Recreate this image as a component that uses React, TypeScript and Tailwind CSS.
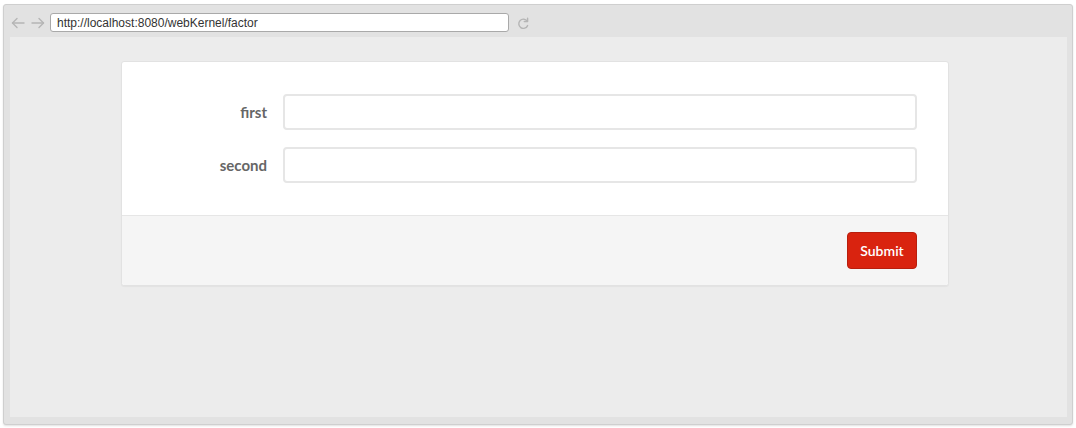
import React from "react";

function Arrow({ dir }: { dir: "left" | "right" }) {
  return (
    <svg width="14" height="12" viewBox="0 0 14 12" fill="none" stroke="#b5b5b5" strokeWidth="1.4" strokeLinecap="round" strokeLinejoin="round">
      {dir === "left" ? (
        <>
          <path d="M13 6H1.5" />
          <path d="M6 1.5L1.5 6L6 10.5" />
        </>
      ) : (
        <>
          <path d="M1 6h11.5" />
          <path d="M8 1.5L12.5 6L8 10.5" />
        </>
      )}
    </svg>
  );
}

function Reload() {
  return (
    <svg width="12" height="13" viewBox="0 0 12 13" fill="none" stroke="#b5b5b5" strokeWidth="1.4" strokeLinecap="round">
      <path d="M10.2 4.2A4.6 4.6 0 1 0 10.6 8.6" />
      <path d="M10.6 1.2V4.6H7.2" strokeLinejoin="round" />
    </svg>
  );
}

export default function App() {
  return (
    <div className="w-[1076px] h-[428px] bg-white pt-[4px] pl-[3px]" style={{ fontFamily: "Lato, 'Noto Sans', sans-serif" }}>
      <div className="w-[1070px] h-[421px] border border-[#cfcfcf] rounded-[3px] bg-[#e2e2e2] flex flex-col shadow-[0_1px_2px_rgba(0,0,0,0.12)]">
        {/* toolbar */}
        <div className="h-[32px] flex items-center pl-[7px] pt-[3px]">
          <div className="flex items-center gap-[6px]">
            <Arrow dir="left" />
            <Arrow dir="right" />
          </div>
          <div className="ml-[5px] w-[459px] h-[19px] bg-white border border-[#a9a9a9] rounded-[3px] flex items-center pl-[6px] text-[12px] text-[#333]" style={{ fontFamily: "'Liberation Sans', Arial, sans-serif" }}>
            http://localhost:8080/webKernel/factor
          </div>
          <div className="ml-[8px] mt-[1px]">
            <Reload />
          </div>
        </div>
        {/* content */}
        <div className="flex-1 ml-[6px] mr-[5px] mb-[7px] bg-[#ececec] pt-[24px] pl-[111px]">
          <div className="w-[828px] bg-white border border-[#e2e2e2] rounded-[3px] shadow-[0_1px_1px_rgba(0,0,0,0.04)]">
            <div className="pt-[32px] pb-[32px] pr-[31px] flex flex-col gap-[17px]">
              {["first", "second"].map((l) => (
                <div key={l} className="flex items-center">
                  <label className="w-[145px] text-right text-[15px] font-bold text-[#666]">{l}</label>
                  <div className="ml-[16px] flex-1 h-[36px] border-2 border-[#e6e6e6] rounded-[4px] bg-white" />
                </div>
              ))}
            </div>
            <div className="bg-[#f5f5f5] border-t border-[#e6e6e6] h-[70px] flex items-start justify-end pt-[16px] pr-[31px] rounded-b-[3px]">
              <button className="w-[70px] h-[37px] bg-[#d9230f] border border-[#b81e0d] rounded-[4px] text-white text-[14px] font-semibold">
                Submit
              </button>
            </div>
          </div>
        </div>
      </div>
    </div>
  );
}
